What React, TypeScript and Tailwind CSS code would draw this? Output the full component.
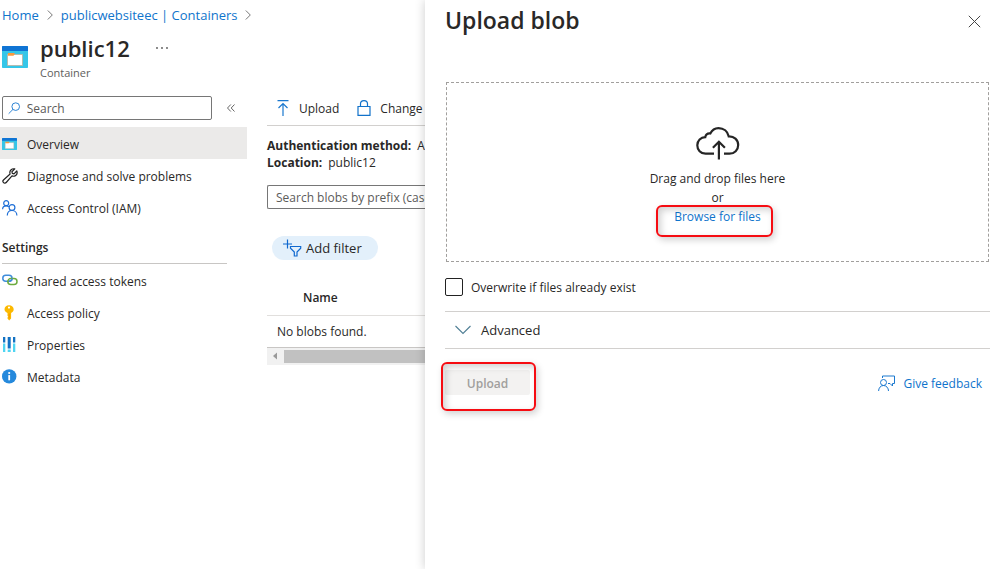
import type { ReactNode } from "react";

function ContainerIcon({ className }: { className: string }) {
  return (
    <svg viewBox="0 0 26 22" className={className} preserveAspectRatio="none" aria-hidden="true">
      <rect width="26" height="22" rx=".8" fill="#35c6e8" />
      <path d="M0 .8Q0 0 .8 0h24.400q.8 0 .8.800V5H0z" fill="#0f74d4" />
      <path d="M5.500 8.500h15v11h-15z" fill="#fff" stroke="#b9b3a0" strokeWidth=".8" />
      <path d="M6 7h6.500v1.200l-1 1.600H6z" fill="#f79a3e" />
    </svg>
  );
}

function WrenchIcon() {
  return (
    <svg viewBox="0 0 16 16" className="size-4" fill="none" stroke="#222" strokeWidth="1.200" strokeLinejoin="round" aria-hidden="true">
      <path d="M12.800.900 9.900 3.700l.4 1.700 1.700.4 2.800-2.800c.8 2.300-.1 4.100-1.700 4.900-1 .5-2.200.4-3.100 0L4.200 14.500c-.7.800-2 .8-2.700.1-.7-.7-.7-1.900 0-2.600l6.600-6c-.5-1.400-.3-2.900.8-4C10 .9 11.500.6 12.800.9z" />
    </svg>
  );
}

function PeopleIcon() {
  return (
    <svg viewBox="0 0 16 16" className="size-4" fill="none" stroke="#1f6fd6" strokeWidth="1.200" aria-hidden="true">
      <circle cx="4.200" cy="3.200" r="2.500" />
      <path d="M.6 9.200c0-2 1.600-3.400 3.600-3.400 1 0 1.900.3 2.600.9" />
      <circle cx="10" cy="7.500" r="2.900" />
      <path d="M5.300 15.500c0-3 2-5 4.700-5s4.900 2 4.900 5" />
    </svg>
  );
}

function LinkIcon() {
  return (
    <svg viewBox="0 0 16 16" className="size-4" fill="none" strokeWidth="1.500" aria-hidden="true">
      <rect x=".8" y="2.200" width="9.200" height="6" rx="3" stroke="#3f8ddb" />
      <rect x="5.800" y="5.600" width="9.200" height="6" rx="3" stroke="#6cab3f" />
      <path d="M7 8.200c1.800 0 3-1.200 3-2.600" stroke="#3f8ddb" />
    </svg>
  );
}

function KeyIcon() {
  return (
    <svg viewBox="0 0 16 16" className="size-4" aria-hidden="true">
      <path fillRule="evenodd" d="M7 .2c2.800 0 4.700 1.700 4.700 4.100 0 1.800-1 3-2.600 3.700v5.500L7.200 15.500 5.500 13.500v-1l.8-.8-.8-.8V8C3.800 7.300 2.500 6.100 2.500 4.300 2.500 1.900 4.200.2 7 .2zm0 1.300a1.100 1.100 0 1 0 0 2.200 1.100 1.100 0 0 0 0-2.200z" fill="#fcb900" />
      <path d="M6.800 8.500h.8v5h-.8z" fill="#f18f00" />
    </svg>
  );
}

function PropertiesIcon() {
  return (
    <svg viewBox="0 0 16 16" className="size-4" aria-hidden="true">
      <path d="M1 0h2.300v5.500H1zM5.700 0h3v11.500h-3zM11 0h2.300v5.500H11z" fill="#1272c4" />
      <path d="M1 6.500h2.300V15H1zM5.700 12.500h3V15h-3zM11 6.500h2.300V15H11z" fill="#4fd5f2" />
    </svg>
  );
}

function InfoIcon() {
  return (
    <svg viewBox="0 0 16 16" className="size-4" aria-hidden="true">
      <circle cx="7.200" cy="7.400" r="7.200" fill="#2589dc" />
      <circle cx="7.200" cy="4" r="1.100" fill="#fff" />
      <path d="M6.300 6.100h1.800v5.200H6.300z" fill="#fff" />
    </svg>
  );
}

function CloudUploadIcon() {
  return (
    <svg viewBox="0 0 44 34" className="h-[34px] w-11" fill="none" stroke="#252525" strokeWidth="2.200" aria-hidden="true">
      <path d="M18 26.700H9.500C4.600 26.700 1.300 22.800 1.300 18.300c0-4.600 3.500-8 8-8.200.5-2.500 2.400-3.900 5-3.600C16 3 19 1.100 22.500 1.100c5.200 0 9.200 3.300 10.200 8.200 5.300-.3 9.500 3.500 9.500 8.600 0 5-3.800 8.800-8.700 8.800h-5.500" />
      <path d="M22.900 32.500V15.500M16.900 20.800l6-6 6 6" />
    </svg>
  );
}

const settings: { label: string; icon: ReactNode }[] = [
  { label: "Shared access tokens", icon: <LinkIcon /> },
  { label: "Access policy", icon: <KeyIcon /> },
  { label: "Properties", icon: <PropertiesIcon /> },
  { label: "Metadata", icon: <InfoIcon /> },
];

const general: { label: string; icon: ReactNode; active?: boolean }[] = [
  { label: "Overview", icon: <ContainerIcon className="h-3 w-[15px]" />, active: true },
  { label: "Diagnose and solve problems", icon: <WrenchIcon /> },
  { label: "Access Control (IAM)", icon: <PeopleIcon /> },
];

function NavItem({ label, icon, active }: { label: string; icon: ReactNode; active?: boolean }) {
  return (
    <li>
      <a href="#" className={active ? "flex h-8 items-center gap-2 bg-[#ebeae9] pt-1 pl-0.5" : "flex h-8 items-center gap-2 pt-1 pl-0.5"}>
        <span className="flex w-[17px] items-center pb-0.5">{icon}</span>
        {label}
      </a>
    </li>
  );
}

function Crumb({ children }: { children: ReactNode }) {
  return (
    <li className="flex items-center gap-2">
      <a href="#" className="text-[#0f74cc]">{children}</a>
      <svg viewBox="0 0 6 10" className="h-2.5 w-1.5" fill="none" stroke="#777" aria-hidden="true">
        <path d="M.8.500 5.300 5 .8 9.500" />
      </svg>
    </li>
  );
}

function Sidebar() {
  return (
    <nav className="w-[247px] shrink-0">
      <div className="flex items-center gap-[15px] pl-0.5">
        <label className="flex h-6 w-[210px] items-center gap-1.5 rounded-xs border border-[#767676] pl-[5px]">
          <svg viewBox="0 0 14 14" className="size-3.5" fill="none" stroke="#1a78cf" aria-hidden="true">
            <circle cx="8.500" cy="5.500" r="4.200" />
            <path d="M5.500 8.500.7 13.300" />
          </svg>
          <input aria-label="Search" placeholder="Search" className="w-full min-w-0 bg-transparent pt-0.5 outline-none placeholder:text-[#5c5b5a]" />
        </label>
        <button aria-label="Collapse menu">
          <svg viewBox="0 0 8 8" className="size-2" fill="none" stroke="#666" aria-hidden="true">
            <path d="M3.800.5.500 4l3.300 3.500M7.500.5 4.200 4l3.300 3.500" />
          </svg>
        </button>
      </div>
      <ul className="mt-[7px]">
        {general.map((item) => (
          <NavItem key={item.label} {...item} />
        ))}
      </ul>
      <h2 className="mr-5 ml-0.5 flex h-[41px] items-center border-b border-[#c8c6c4] pt-2.5 font-semibold">Settings</h2>
      <ul>
        {settings.map((item) => (
          <NavItem key={item.label} {...item} />
        ))}
      </ul>
    </nav>
  );
}

function BlobList() {
  return (
    <main className="min-w-0 flex-1 pl-5">
      <div className="flex h-[30px] items-center gap-[17px] border-b border-[#d2d0ce] pb-1 pl-2">
        <button className="flex items-center gap-2">
          <svg viewBox="0 0 16 18" className="h-[18px] w-4" fill="none" stroke="#1a78cf" strokeWidth="1.200" aria-hidden="true">
            <path d="M2.500.700h11M8 16V3.500M3.500 8 8 3.500 12.500 8" />
          </svg>
          Upload
        </button>
        <button className="flex items-center gap-2">
          <svg viewBox="0 0 16 18" className="h-[18px] w-4" fill="none" stroke="#1272ca" strokeWidth="1.200" aria-hidden="true">
            <path d="M2 6.500h12v8.800H2zM4.500 6.500V3.800C4.500 1.800 6 .6 8 .6s3.500 1.200 3.500 3.200v2.700" />
          </svg>
          Change
        </button>
      </div>
      <dl className="mt-[11px] leading-[17px]">
        <div className="flex gap-1.5">
          <dt className="font-bold">Authentication method:</dt>
          <dd>A</dd>
        </div>
        <div className="flex gap-1.5">
          <dt className="font-bold">Location:</dt>
          <dd>public12</dd>
        </div>
      </dl>
      <input
        aria-label="Search blobs"
        placeholder="Search blobs by prefix (case-sensitive)"
        className="mt-3.5 block h-6 w-full rounded-l-xs border border-r-0 border-[#767676] pl-2 placeholder:text-[#5c5b5a]"
      />
      <button className="mt-[27px] ml-[5px] flex h-6 items-center gap-1 rounded-full bg-[#e3f0fb] pr-4 pl-2.5 text-[13px]">
        <svg viewBox="0 0 20 18" className="h-[18px] w-5" fill="none" stroke="#0f68cf" strokeWidth="1.200" aria-hidden="true">
          <path d="M5.500.5v9M1 5h9M8.500 7.500h10.200v1.700L15 13v4h-2.700v-4L8.500 9.200z" />
        </svg>
        Add filter
      </button>
      <table className="mt-5 w-full border-collapse text-left">
        <thead>
          <tr className="h-[35px] border-b border-[#e1dfdd]">
            <th className="pt-0.5 pl-9 font-semibold">Name</th>
          </tr>
        </thead>
        <tbody>
          <tr className="h-8 border-b border-[#c8c6c4]">
            <td className="pt-0.5 pl-2.5">No blobs found.</td>
          </tr>
        </tbody>
      </table>
      <div className="flex h-[17px] items-center bg-[#f1f1f1]">
        <svg viewBox="0 0 17 16" className="h-4 w-[17px]" aria-hidden="true">
          <path d="M10 4.500v7L6 8z" fill="#999" />
        </svg>
        <div className="h-[13px] flex-1 bg-[#c1c1c1]" />
      </div>
    </main>
  );
}

const highlight =
  "pointer-events-none absolute rounded-md border-2 border-[#f60c12] shadow-[2px_3px_7px_rgba(0,0,0,0.18),inset_3px_3px_7px_rgba(0,0,0,0.18)]";

function UploadPanel() {
  return (
    <aside className="z-10 min-w-0 flex-1 bg-white pr-[17px] pl-5 shadow-[0_0_10px_rgba(0,0,0,0.2)]">
      <header className="flex h-[42px] items-center justify-between pr-[9px]">
        <h1 className="pb-0.5 text-[23px] font-semibold">Upload blob</h1>
        <button aria-label="Close">
          <svg viewBox="0 0 13 13" className="size-[13px]" fill="none" stroke="#444" aria-hidden="true">
            <path d="m.8.800 11.400 11.400M12.200.8.800 12.200" />
          </svg>
        </button>
      </header>
      <div className="mt-10 mr-px ml-px flex h-[180px] flex-col items-center border border-dashed border-[#a19f9d] pt-11 leading-[19px]">
        <CloudUploadIcon />
        <p className="mt-2">Drag and drop files here</p>
        <p>or</p>
        <div className="relative">
          <a href="#" className="text-[#0f74cc]">Browse for files</a>
          <span className={`${highlight} -top-0.5 -right-3 -left-4.5 h-8`} />
        </div>
      </div>
      <label className="flex h-[50px] items-center gap-2 border-b border-[#d2d0ce]">
        <input type="checkbox" className="size-[18px] appearance-none rounded-xs border border-[#222] bg-white" />
        <span className="pt-0.5">Overwrite if files already exist</span>
      </label>
      <button className="flex h-[37px] w-full items-center gap-2.5 border-b border-[#d2d0ce] pl-2.5 text-[13px]">
        <svg viewBox="0 0 16 10" className="h-2.5 w-4" fill="none" stroke="#4f7f95" strokeWidth="1.100" aria-hidden="true">
          <path d="m.5 1 7.500 7.500L15.500 1" />
        </svg>
        Advanced
      </button>
      <footer className="mt-[21px] flex items-center justify-between pr-2">
        <div className="relative">
          <button disabled className="h-[25px] w-[85px] rounded-xs bg-[#f3f2f1] pt-0.5 font-semibold text-[#a19f9d]">Upload</button>
          <span className={`${highlight} -top-2 -right-1.5 -left-1 h-[49px]`} />
        </div>
        <a href="#" className="flex items-center gap-2 pt-0.5 text-[#0f74cc]">
          <svg viewBox="0 0 17 17" className="size-[17px]" fill="none" stroke="#1a78cf" aria-hidden="true">
            <circle cx="5.500" cy="7.500" r="3" />
            <path d="M.6 16c0-3 2-5.500 4.900-5.500s5 2.500 5 5.500M4.500 3V1h12v7.500h-2V11L12 8.500h-2" />
          </svg>
          Give feedback
        </a>
      </footer>
    </aside>
  );
}

export default function App() {
  return (
    <div className="flex min-h-screen bg-white font-['Open_Sans','Noto_Sans',sans-serif] text-xs leading-5 text-[#292827]">
      <div className="w-[425px] shrink-0 overflow-hidden whitespace-nowrap">
        <ol className="flex h-[30px] items-center gap-2 pl-0.5 text-[13px]">
          <Crumb>Home</Crumb>
          <Crumb>publicwebsiteec | Containers</Crumb>
        </ol>
        <header className="flex h-[66px] gap-3 pl-0.5">
          <ContainerIcon className="mt-4 h-[22px] w-[26px]" />
          <div>
            <div className="flex items-center gap-[26px]">
              <h1 className="text-[22px] leading-9 font-semibold">public12</h1>
              <button aria-label="More actions">
                <svg viewBox="0 0 12 4" className="h-1 w-3" fill="#555" aria-hidden="true">
                  <circle cx="1" cy="2" r=".9" />
                  <circle cx="6" cy="2" r=".9" />
                  <circle cx="11" cy="2" r=".9" />
                </svg>
              </button>
            </div>
            <p className="text-[11px] leading-3.5 text-[#605e5c]">Container</p>
          </div>
        </header>
        <div className="flex">
          <Sidebar />
          <BlobList />
        </div>
      </div>
      <UploadPanel />
    </div>
  );
}
